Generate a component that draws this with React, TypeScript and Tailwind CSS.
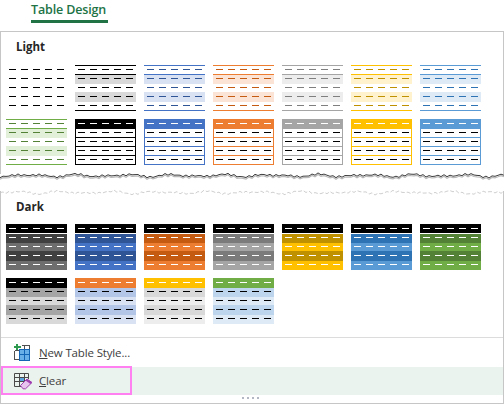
const FONT = { fontFamily: '"Open Sans", "Noto Sans", sans-serif' };

// every style preview is 61x46 with five rows of dashes
function Dashes({ y, color }: { y: number; color: string }) {
  return (
    <>
      {[3, 15, 27, 39, 51].map((x) => (
        <rect key={x} x={x} y={y} width={7} height={1} fill={color} />
      ))}
    </>
  );
}

function LightSwatch({ dash, line, band }: { dash: string; line?: string; band?: string }) {
  return (
    <svg width="61" height="46" viewBox="0 0 61 46" shapeRendering="crispEdges">
      {band && <rect x="0" y="10" width="61" height="9" fill={band} />}
      {band && <rect x="0" y="27" width="61" height="10" fill={band} />}
      {line && <rect x="0" y="0" width="61" height="1" fill={line} />}
      {line && <rect x="0" y="9" width="61" height="1" fill={line} />}
      {line && <rect x="0" y="45" width="61" height="1" fill={line} />}
      {[4, 13, 22, 31, 40].map((y) => (
        <Dashes key={y} y={y} color={dash} />
      ))}
    </svg>
  );
}

function GridSwatch({ color }: { color: string }) {
  return (
    <svg width="61" height="46" viewBox="0 0 61 46" shapeRendering="crispEdges">
      <rect x="0" y="0" width="61" height="10" fill={color} />
      <rect x="0.5" y="9.5" width="60" height="36" fill="none" stroke={color} />
      {[18, 27, 36].map((y) => (
        <rect key={y} x="0" y={y} width="61" height="1" fill={color} />
      ))}
      <Dashes y={4} color="#ffffff" />
      {[13, 22, 31, 40].map((y) => (
        <Dashes key={y} y={y} color="#000000" />
      ))}
    </svg>
  );
}

function DarkSwatch({ bands, head = '#000000', dash = '#ffffff', headGap = true }: { bands: string[]; head?: string; dash?: string; headGap?: boolean }) {
  return (
    <svg width="61" height="46" viewBox="0 0 61 46" shapeRendering="crispEdges">
      <rect x="0" y="0" width="61" height={headGap ? 9 : 10} fill={head} />
      <rect x="0" y="10" width="61" height="9" fill={bands[0]} />
      <rect x="0" y="19" width="61" height="8" fill={bands[1]} />
      <rect x="0" y="27" width="61" height="10" fill={bands[0]} />
      <rect x="0" y="37" width="61" height="9" fill={bands[1]} />
      <Dashes y={4} color="#ffffff" />
      {[13, 22, 31, 40].map((y) => (
        <Dashes key={y} y={y} color={dash} />
      ))}
    </svg>
  );
}

function TornEdge() {
  // the ripped gap between the two halves of the gallery
  const jag = (base: number, seed: number) => {
    let pts = '';
    for (let x = 0; x <= 504; x += 3) {
      const n = Math.sin(x * 0.9 + seed) + Math.sin(x * 2.3 + seed * 2) * 0.7 + Math.sin(x * 0.13 + seed) * 0.9;
      pts += `${x},${(base + n).toFixed(1)} `;
    }
    return pts;
  };
  return (
    <svg width="504" height="17" viewBox="0 0 504 17" className="block overflow-visible">
      <polyline points={jag(3, 1)} fill="none" stroke="#b8b8b8" strokeWidth="1.2" />
      <polyline points={jag(1.5, 1)} fill="none" stroke="#3c3c3c" strokeWidth="1" />
      <polyline points={jag(18.5, 3)} fill="none" stroke="#cfcfcf" strokeWidth="1" strokeDasharray="4 2" />
    </svg>
  );
}

function NewStyleIcon() {
  return (
    <svg width="20" height="18" viewBox="0 0 20 18" shapeRendering="crispEdges">
      <path d="M1.5 7V15.5H6 M1.5 6.5H6 M8.5 1.5H16.5V5" fill="none" stroke="#505050" />
      <path d="M11.5 1.5V5" fill="none" stroke="#505050" />
      <rect x="6" y="5" width="11" height="12" fill="#6ab0e8" />
      <path d="M6.5 5.5H16.5V16.5H6.5Z M6.5 10.5H16.5 M11.5 5.5V16.5" fill="none" stroke="#1565b5" />
      <path d="M1 3H8 M4 0V6" fill="none" stroke="#2e9a50" strokeWidth="1.5" />
    </svg>
  );
}

function ClearIcon() {
  return (
    <svg width="20" height="18" viewBox="0 0 20 18">
      <rect x="7" y="6" width="5" height="4" fill="#5aa5e0" />
      <path d="M1.5 1.5H15.5V7 M1.5 1.5V14.5H8 M1.5 5.5H15.5 M1.5 9.5H11 M6.5 1.5V14.5 M11.5 1.5V9" fill="none" stroke="#4a4a4a" />
      <path d="M7.5 13.5L14 7L19 10.5L12.5 16.8H10Z" fill="#e6c4ee" stroke="#a040b0" />
      <path d="M14 7L19 10.5L17.5 12L12.5 8.5Z" fill="#a040b0" />
    </svg>
  );
}

const lightRow1 = [
  { dash: '#000000' },
  { dash: '#000000', line: '#000000', band: '#d9d9d9' },
  { dash: '#2f5597', line: '#4472c4', band: '#d9e2f3' },
  { dash: '#c55a11', line: '#ed7d31', band: '#fbe4d5' },
  { dash: '#7f7f7f', line: '#a5a5a5', band: '#ededed' },
  { dash: '#bf9000', line: '#ffc000', band: '#fff2cc' },
  { dash: '#2e74b5', line: '#5b9bd5', band: '#deeaf6' },
];

const gridColors = ['#000000', '#4472c4', '#ed7d31', '#a5a5a5', '#ffc000', '#5b9bd5'];

const darkRow1 = [
  ['#404040', '#6e6e6e'],
  ['#2f5597', '#4472c4'],
  ['#c55a11', '#ed7d31'],
  ['#7b7b7b', '#a5a5a5'],
  ['#bf9000', '#ffc000'],
  ['#2e74b5', '#5b9bd5'],
  ['#538135', '#70ad47'],
];

const darkRow2 = [
  { head: '#000000', bands: ['#a5a5a5', '#d9d9d9'] },
  { head: '#ed7d31', bands: ['#b4c6e7', '#d9e2f3'] },
  { head: '#ffc000', bands: ['#d9d9d9', '#ededed'] },
  { head: '#70ad47', bands: ['#bdd6ee', '#deeaf6'] },
];

export default function App() {
  return (
    <div className="w-[504px] h-[404px] bg-white overflow-hidden flex flex-col" style={FONT}>
      <div className="h-[31px] pl-[31px] shrink-0">
        <div className="w-[77px] h-[23px] border-b-[3px] border-[#217346] text-[12.5px] tracking-[-0.15px] leading-[20px] font-semibold text-[#217346] whitespace-nowrap">
          Table Design
        </div>
      </div>

      <div className="flex-1 flex flex-col border-t border-b border-[#c6c6c6] min-h-0">
        <div className="h-[142px] border-x border-[#c6c6c6] pl-[5px] shrink-0">
          <div className="h-[33px] pl-[10px] pt-[7px] text-[11.5px] leading-[16px] font-bold text-[#262626]">Light</div>
          <div className="grid grid-cols-[repeat(7,61px)] gap-[8px]">
            {lightRow1.map((s, i) => (
              <LightSwatch key={i} {...s} />
            ))}
            <LightSwatch dash="#538135" line="#70ad47" band="#e2efd9" />
            {gridColors.map((c) => (
              <GridSwatch key={c} color={c} />
            ))}
          </div>
        </div>

        <div className="shrink-0 h-[17px]">
          <TornEdge />
        </div>

        <div className="flex-1 border-x border-[#c6c6c6] flex flex-col min-h-0">
          <div className="pl-[5px] h-[134px] shrink-0 pt-[8px]">
            <div className="h-[25px] pl-[10px] text-[11.5px] leading-[16px] font-bold text-[#262626]">Dark</div>
            <div className="grid grid-cols-[repeat(7,61px)] gap-[8px]">
              {darkRow1.map((b, i) => (
                <DarkSwatch key={i} bands={b} />
              ))}
              {darkRow2.map((s, i) => (
                <DarkSwatch key={i} head={s.head} bands={s.bands} dash="#000000" headGap={false} />
              ))}
            </div>
          </div>

          <div className="mt-[12px] border-t border-[#dcdcdc] flex flex-col">
            <div className="h-[29px] flex items-center pl-[12px] gap-[6px] text-[11.5px] tracking-[-0.15px] text-[#404040]">
              <NewStyleIcon />
              <span>
                <span className="underline">N</span>ew Table Style...
              </span>
            </div>
            <div className="relative h-[28px] bg-[#ebf3ee] flex items-center pl-[12px] gap-[6px] text-[11.5px] tracking-[-0.15px] text-[#404040]">
              <ClearIcon />
              <span>
                <span className="underline">C</span>lear
              </span>
              <div className="absolute left-0 -top-px w-[131px] h-[29px] border-2 border-[#ff80f0]" />
            </div>
            <div className="h-[8px] pb-[2px] flex justify-center items-center gap-[3px] pr-[3px]">
              {[0, 1, 2, 3].map((i) => (
                <div key={i} className="w-[2px] h-[2px] bg-[#b4b8c4]" />
              ))}
            </div>
          </div>
        </div>
      </div>
    </div>
  );
}
